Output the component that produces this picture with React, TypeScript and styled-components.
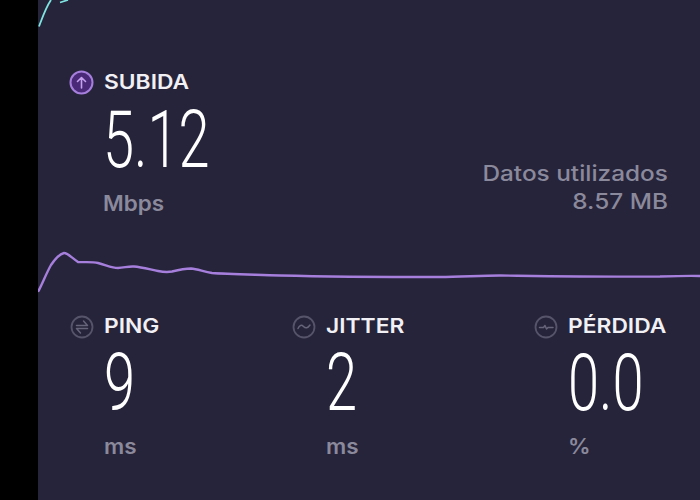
import React from "react";
import styled, { createGlobalStyle } from "styled-components";

const Global = createGlobalStyle`
  html, body { margin: 0; padding: 0; background: #000; overflow: hidden; }
  #root { width: 700px; height: 500px; }
`;

const Screen = styled.div`
  width: 700px;
  height: 500px;
  display: flex;
  background: #000;
  font-family: "Inter", "Liberation Sans", sans-serif;
`;

const Rail = styled.div`
  width: 38px;
  flex: none;
  background: #000;
`;

const Panel = styled.main`
  position: relative;
  flex: 1;
  display: flex;
  flex-direction: column;
  background: #26243a;
  padding-top: 61px;
  overflow: hidden;
`;

const TopTrace = styled.svg`
  position: absolute;
  left: 0;
  top: 0;
`;

const Hero = styled.section`
  display: flex;
  justify-content: space-between;
  align-items: flex-end;
  padding: 0 32px 0 31px;
  height: 155px;
`;

const Metric = styled.div`
  display: flex;
  flex-direction: column;
`;

const Heading = styled.div`
  display: flex;
  align-items: center;
  gap: 10px;
  height: 25px;
`;

const Label = styled.span`
  display: inline-block;
  color: #f1f0f5;
  font-size: 20px;
  font-weight: 600;
  line-height: 25px;
  white-space: nowrap;
  transform: scaleX(1.14);
  transform-origin: left center;
`;

const Value = styled.div<{ $gap: number }>`
  margin: ${(p) => p.$gap}px 0 0 34px;
  color: #fff;
  font-family: "Roboto", "Liberation Sans", sans-serif;
  font-weight: 300;
  font-size: 80px;
  line-height: 60px;
  height: 60px;
  transform: scaleX(0.7);
  transform-origin: left center;
  white-space: nowrap;
`;

const Unit = styled.div<{ $gap: number }>`
  margin: ${(p) => p.$gap}px 0 0 34px;
  color: #8b899c;
  font-size: 21px;
  font-weight: 600;
  line-height: 24px;
  transform: scaleX(1.07);
  transform-origin: left center;
`;

const DataUsage = styled.div`
  color: #8b899c;
  font-size: 21px;
  font-weight: 500;
  line-height: 28px;
  text-align: right;
  white-space: nowrap;
  transform: scaleX(1.16);
  transform-origin: right center;
`;

const Chart = styled.svg`
  display: block;
  margin-top: 34px;
`;

const Stats = styled.section`
  display: grid;
  grid-template-columns: 222px 242px auto;
  padding: 18px 0 0 32px;
`;

const Ring = styled.svg`
  flex: none;
`;

const UpIcon = () => (
  <Ring width="25" height="25" viewBox="0 0 25 25" fill="none">
    <circle cx="12.5" cy="12.5" r="11" fill="#4a2a78" stroke="#a67fdc" strokeWidth="2" />
    <path d="M12.5 18V7.5M8.5 11.5l4-4 4 4" stroke="#c4a0ee" strokeWidth="1.6" strokeLinecap="round" strokeLinejoin="round" />
  </Ring>
);

const GreyIcon = ({ d }: { d: string }) => (
  <Ring width="24" height="24" viewBox="0 0 24 24" fill="none">
    <circle cx="12" cy="12" r="10.5" stroke="#56546a" strokeWidth="1.8" />
    <path d={d} stroke="#66647a" strokeWidth="1.5" strokeLinecap="round" strokeLinejoin="round" />
  </Ring>
);

const stats = [
  { label: "PING", value: "9", unit: "ms", icon: "M6.5 10.5h11L13.500 6M17.500 13.500h-11L10.500 18" },
  { label: "JITTER", value: "2", unit: "ms", icon: "M6 13.500c1.500-3.500 3.500-4 5.500-2s4 2 6.500-1.500" },
  { label: "PÉRDIDA", value: "0.0", unit: "%", icon: "M5.500 12.500h4l1.500-2 1.500 3.500 1.500-1.500h5" },
];

export default function App() {
  return (
    <Screen>
      <Global />
      <Rail />
      <Panel>
        <TopTrace width="60" height="30" viewBox="0 0 60 30" fill="none">
          <path d="M1 26.500C5 16 8 7 13 0M22 2.500L30 0" stroke="#7fe3e0" strokeWidth="1.800" />
        </TopTrace>
        <Hero>
          <Metric>
            <Heading>
              <UpIcon />
              <Label>SUBIDA</Label>
            </Heading>
            <Value $gap={15}>5.12</Value>
            <Unit $gap={22}>Mbps</Unit>
          </Metric>
          <DataUsage>
            Datos utilizados
            <br />
            8.57 MB
          </DataUsage>
        </Hero>
        <Chart width="662" height="46" viewBox="38 250 662 46" fill="none">
          <path
            d="M38.500 291C43 282 47 272 51 265C55 259 60 254 64 253C67 252.500 72 258 78 262C84 262.500 92 261.500 98 263C106 265 112 268 118 268C124 268 128 266 134 266.500C142 267 152 270 158 271C163 272 167 272.500 172 271.500C178 270 184 268.500 191 268.500C198 269 204 272 212 273C225 274 250 274.500 280 275.500C320 276.500 380 277 440 277C460 277 480 275.500 500 275.500C540 276 600 277 660 276.500C675 276 690 275.500 700 276"
            stroke="#a67fdc"
            strokeWidth="2.400"
            strokeLinecap="round"
            strokeLinejoin="round"
          />
        </Chart>
        <Stats>
          {stats.map((s) => (
            <Metric key={s.label}>
              <Heading>
                <GreyIcon d={s.icon} />
                <Label>{s.label}</Label>
              </Heading>
              <Value $gap={14}>{s.value}</Value>
              <Unit $gap={22}>{s.unit}</Unit>
            </Metric>
          ))}
        </Stats>
      </Panel>
    </Screen>
  );
}
